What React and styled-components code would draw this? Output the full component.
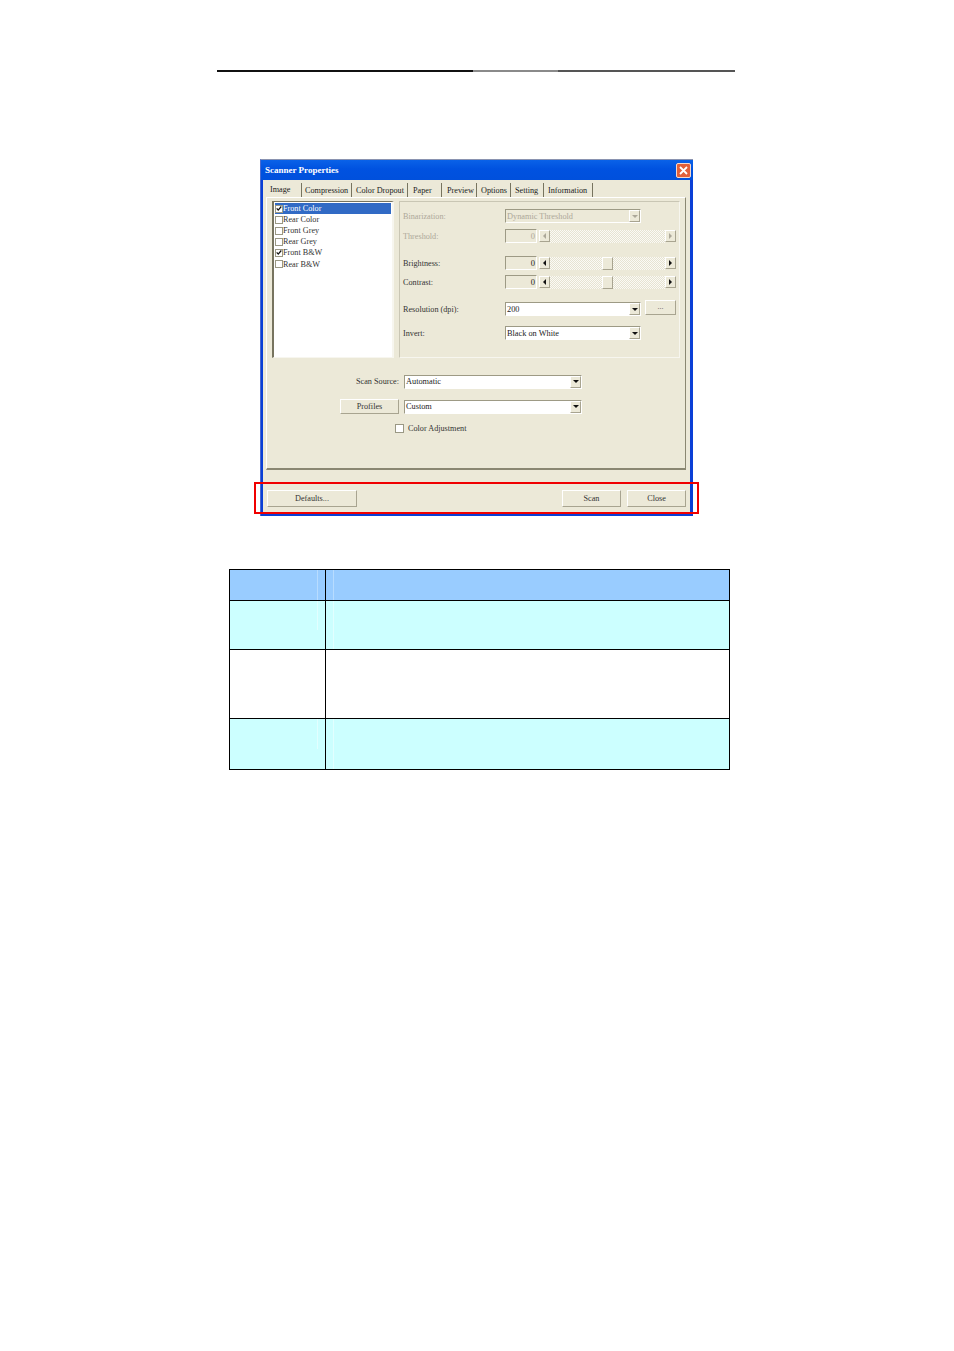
import React from "react"
import styled, { createGlobalStyle } from "styled-components"

const GlobalStyle = createGlobalStyle`
  html, body {
    margin: 0;
    padding: 0;
    background: #ffffff;
  }
  body {
    font-family: "Liberation Serif", serif;
  }
`

const Page = styled.div`
  width: 954px;
  height: 1351px;
  padding-top: 70px;
  box-sizing: border-box;
  display: flex;
  flex-direction: column;
  overflow: hidden;
`

const HeaderRule = styled.div`
  display: flex;
  margin-left: 217px;
  width: 518px;
  height: 2px;
`

const RulePart = styled.div`
  width: ${(p) => p.$width}px;
  background: ${(p) => p.$color};
`

const Window = styled.div`
  position: relative;
  margin: 87px 0 0 260px;
  width: 433px;
  height: 357px;
  box-sizing: border-box;
  display: flex;
  flex-direction: column;
  background: #0a3fd6;
  border-top: 1px solid #8a93b0;
  border-left: 1px solid #4a6ad0;
`

const TitleBar = styled.div`
  height: 20px;
  flex: none;
  display: flex;
  align-items: center;
  justify-content: space-between;
  padding: 0 2px 0 4px;
  background: linear-gradient(#0a62e8 0%, #0052e0 45%, #0050dc 100%);
`

const Title = styled.span`
  color: #ffffff;
  font-size: 9px;
  font-weight: bold;
`

const CloseButton = styled.div`
  width: 15px;
  height: 15px;
  display: flex;
  align-items: center;
  justify-content: center;
  border: 1px solid #f4d8cc;
  box-sizing: border-box;
  border-radius: 2px;
  background: #e2603a;
`

const WindowBody = styled.div`
  flex: 1;
  margin: 0 3px 2px 2px;
  padding: 3px 4px 0 3px;
  display: flex;
  flex-direction: column;
  background: #ece9d8;
`

const TabStrip = styled.div`
  display: flex;
  height: 14px;
  flex: none;
`

const Tab = styled.div`
  width: ${(p) => p.$width}px;
  height: 14px;
  box-sizing: border-box;
  font-size: 8.2px;
  line-height: 14px;
  white-space: nowrap;
  color: #222222;
  padding-left: ${(p) => p.$inset}px;
  padding-top: ${(p) => (p.$active ? "0" : "1px")};
  border-right: 1px solid #77745f;
`

const TabPanel = styled.div`
  height: 273px;
  box-sizing: border-box;
  flex: none;
  padding: 3px 5px 0 5px;
  border-top: 1px solid #ffffff;
  border-left: 1px solid #ffffff;
  border-right: 1px solid #8a8772;
  border-bottom: 2px solid #8a8772;
`

const TopArea = styled.div`
  display: flex;
  gap: 5px;
`

const ChannelList = styled.div`
  width: 122px;
  height: 157px;
  box-sizing: border-box;
  padding: 1px;
  background: #ffffff;
  border-top: 1px solid #77745f;
  border-left: 2px solid #77745f;
  border-right: 2px solid #f7f6ef;
  border-bottom: 1px solid #f7f6ef;
`

const ChannelRow = styled.div`
  display: flex;
  align-items: center;
  height: 11.1px;
  font-size: 8.2px;
  white-space: nowrap;
  color: ${(p) => (p.$selected ? "#ffffff" : "#333333")};
  background: ${(p) => (p.$selected ? "#316ac5" : "transparent")};
`

const CheckBox = styled.div`
  width: 8px;
  height: 8px;
  flex: none;
  box-sizing: border-box;
  display: flex;
  align-items: center;
  justify-content: center;
  background: #ffffff;
  border: 1px solid #9a9884;
`

const SettingsGroup = styled.div`
  width: 281px;
  height: 157px;
  box-sizing: border-box;
  padding: 7px 3px 0 3px;
  border: 1px solid #c9c6b4;
  border-right-color: #f7f6ef;
  border-bottom-color: #f7f6ef;
`

const SettingRow = styled.div`
  display: flex;
  align-items: center;
  height: 14px;
  margin-top: ${(p) => p.$top || 0}px;
`

const SettingLabel = styled.div`
  width: 102px;
  flex: none;
  font-size: 8.2px;
  white-space: nowrap;
  color: ${(p) => (p.$disabled ? "#aca899" : "#333333")};
`

const Sunken = styled.div`
  box-sizing: border-box;
  height: 14px;
  border-top: 1px solid #9d9a85;
  border-left: 1px solid #9d9a85;
  border-right: 1px solid #ffffff;
  border-bottom: 1px solid #ffffff;
  background: ${(p) => (p.$disabled ? "#ece9d8" : "#ffffff")};
`

const Combo = styled(Sunken)`
  width: ${(p) => p.$width}px;
  flex: none;
  display: flex;
  align-items: center;
  justify-content: space-between;
  padding: 0 0 0 1px;
  font-size: 8.3px;
  white-space: nowrap;
  color: ${(p) => (p.$disabled ? "#aca899" : "#222222")};
`

const Raised = styled.div`
  box-sizing: border-box;
  background: #ece9d8;
  border-top: 1px solid #ffffff;
  border-left: 1px solid #ffffff;
  border-right: 1px solid #a8a490;
  border-bottom: 1px solid #a8a490;
`

const ArrowBox = styled(Raised)`
  width: 11px;
  height: 12px;
  flex: none;
  display: flex;
  align-items: center;
  justify-content: center;
`

const Arrow = styled.div`
  width: 0;
  height: 0;
  border: 3px solid transparent;
  ${(p) => {
    const color = p.$disabled ? "#aca899" : "#111111"
    if (p.$dir === "left") return `border-left: 0; border-right-color: ${color};`
    if (p.$dir === "right") return `border-right: 0; border-left-color: ${color};`
    return `border-bottom: 0; border-top-color: ${color};`
  }}
`

const NumberBox = styled(Sunken)`
  width: 32px;
  flex: none;
  text-align: right;
  padding-right: 1px;
  font-size: 8.5px;
  line-height: 12px;
  color: ${(p) => (p.$disabled ? "#aca899" : "#222222")};
  background: #ece9d8;
`

const ScrollBar = styled.div`
  display: flex;
  align-items: center;
  margin-left: 2px;
  width: 137px;
  height: 13px;
`

const Track = styled.div`
  flex: 1;
  height: 13px;
  display: flex;
  justify-content: flex-start;
  background-color: #f5f3ea;
  background-image: repeating-conic-gradient(#e6e3d2 0 25%, #fbfaf5 0 50%);
  background-size: 2px 2px;
`

const Thumb = styled(Raised)`
  width: 11px;
  height: 13px;
  margin-left: 52px;
`

const SmallButton = styled(Raised)`
  width: 32px;
  height: 15px;
  margin-left: 4px;
  margin-top: -3px;
  text-align: center;
  font-size: 8px;
  line-height: 12px;
  color: #555555;
`

const SourceForm = styled.div`
  display: flex;
  flex-direction: column;
  margin-top: 16px;
`

const FormRow = styled.div`
  display: flex;
  align-items: center;
  justify-content: flex-end;
  gap: 5px;
  height: 15px;
  width: 310px;
  margin-top: ${(p) => p.$top || 0}px;
`

const FormLabel = styled.div`
  font-size: 8.2px;
  color: #333333;
  white-space: nowrap;
`

const AdjustRow = styled.div`
  display: flex;
  align-items: center;
  gap: 4px;
  margin: 10px 0 0 123px;
  font-size: 8.2px;
  color: #333333;
`

const AdjustBox = styled(CheckBox)`
  width: 9px;
  height: 9px;
`

const PushButton = styled(Raised)`
  width: ${(p) => p.$width}px;
  height: ${(p) => p.$height || 17}px;
  flex: none;
  display: flex;
  align-items: center;
  justify-content: center;
  font-size: 8.2px;
  padding-bottom: 1px;
  color: #333333;
`

const ButtonBar = styled.div`
  display: flex;
  align-items: flex-start;
  gap: 6px;
  margin-top: 20px;
  padding-left: 1px;
`

const Spacer = styled.div`
  flex: 1;
`

const Highlight = styled.div`
  position: absolute;
  left: -7px;
  top: 322px;
  width: 445px;
  height: 32px;
  box-sizing: border-box;
  border: 2px solid #f00000;
  pointer-events: none;
`

const InfoTable = styled.div`
  margin: 53px 0 0 229px;
  width: 501px;
  box-sizing: border-box;
  display: grid;
  grid-template-columns: 96px 1fr;
  grid-template-rows: 31px 49px 69px 51px;
  border-top: 1px solid #000000;
  border-left: 1px solid #000000;
`

const InfoCell = styled.div`
  box-sizing: border-box;
  border-right: 1px solid #000000;
  border-bottom: 1px solid #000000;
  background-color: ${(p) => p.$bg};
`

const Streak = styled.div`
  width: 1px;
  height: ${(p) => p.$height};
  margin-left: ${(p) => p.$left}px;
  background: ${(p) => p.$color};
`

const channels = [
  { name: "Front Color", checked: true, selected: true },
  { name: "Rear Color" },
  { name: "Front Grey" },
  { name: "Rear Grey" },
  { name: "Front B&W", checked: true },
  { name: "Rear B&W" },
]

const tabs = [
  { label: "Image", width: 36, inset: 4, active: true },
  { label: "Compression", width: 50, inset: 3 },
  { label: "Color Dropout", width: 56, inset: 4 },
  { label: "Paper", width: 34, inset: 5 },
  { label: "Preview", width: 35, inset: 5 },
  { label: "Options", width: 34, inset: 4 },
  { label: "Setting", width: 33, inset: 4 },
  { label: "Information", width: 49, inset: 4 },
]

const rows = [
  { bg: "#99ccff", streak: "#b8dcff", first: "100%", second: "100%" },
  { bg: "#ccffff", streak: "#e2ffff", first: "60%", second: "100%" },
  { bg: "#ffffff", streak: "#ffffff", first: "0", second: "0" },
  { bg: "#ccffff", streak: "#e2ffff", first: "60%", second: "100%" },
]

const Check = () => (
  <svg width="7" height="7" viewBox="0 0 7 7">
    <path d="M0.8 3.4 L2.6 5.4 L6.2 1.2" fill="none" stroke="#111" strokeWidth="1.5" />
  </svg>
)

const Slider = ({ disabled, thumb }) => (
  <>
    <NumberBox $disabled={disabled}>0</NumberBox>
    <ScrollBar>
      <ArrowBox>
        <Arrow $dir="left" $disabled={disabled} />
      </ArrowBox>
      <Track>{thumb && <Thumb />}</Track>
      <ArrowBox>
        <Arrow $dir="right" $disabled={disabled} />
      </ArrowBox>
    </ScrollBar>
  </>
)

const ComboBox = ({ value, width, disabled }) => (
  <Combo $width={width} $disabled={disabled}>
    {value}
    <ArrowBox>
      <Arrow $disabled={disabled} />
    </ArrowBox>
  </Combo>
)

export default function App() {
  return (
    <Page>
      <GlobalStyle />
      <HeaderRule>
        <RulePart $width={256} $color="#111111" />
        <RulePart $width={85} $color="#8a8a8a" />
        <RulePart $width={177} $color="#555555" />
      </HeaderRule>

      <Window>
        <TitleBar>
          <Title>Scanner Properties</Title>
          <CloseButton>
            <svg width="9" height="9" viewBox="0 0 9 9">
              <path d="M1 1 L8 8 M8 1 L1 8" stroke="#fff" strokeWidth="1.8" />
            </svg>
          </CloseButton>
        </TitleBar>

        <WindowBody>
          <TabStrip>
            {tabs.map((tab) => (
              <Tab key={tab.label} $width={tab.width} $inset={tab.inset} $active={tab.active}>
                {tab.label}
              </Tab>
            ))}
          </TabStrip>

          <TabPanel>
            <TopArea>
              <ChannelList>
                {channels.map((channel) => (
                  <ChannelRow key={channel.name} $selected={channel.selected}>
                    <CheckBox>{channel.checked && <Check />}</CheckBox>
                    {channel.name}
                  </ChannelRow>
                ))}
              </ChannelList>

              <SettingsGroup>
                <SettingRow>
                  <SettingLabel $disabled>Binarization:</SettingLabel>
                  <ComboBox value="Dynamic Threshold" width={136} disabled />
                </SettingRow>
                <SettingRow $top={6}>
                  <SettingLabel $disabled>Threshold:</SettingLabel>
                  <Slider disabled />
                </SettingRow>
                <SettingRow $top={13}>
                  <SettingLabel>Brightness:</SettingLabel>
                  <Slider thumb />
                </SettingRow>
                <SettingRow $top={5}>
                  <SettingLabel>Contrast:</SettingLabel>
                  <Slider thumb />
                </SettingRow>
                <SettingRow $top={13}>
                  <SettingLabel>Resolution (dpi):</SettingLabel>
                  <ComboBox value="200" width={136} />
                  <SmallButton>...</SmallButton>
                </SettingRow>
                <SettingRow $top={10}>
                  <SettingLabel>Invert:</SettingLabel>
                  <ComboBox value="Black on White" width={136} />
                </SettingRow>
              </SettingsGroup>
            </TopArea>

            <SourceForm>
              <FormRow>
                <FormLabel>Scan Source:</FormLabel>
                <ComboBox value="Automatic" width={178} />
              </FormRow>
              <FormRow $top={10}>
                <PushButton $width={59} $height={15}>
                  Profiles
                </PushButton>
                <ComboBox value="Custom" width={178} />
              </FormRow>
              <AdjustRow>
                <AdjustBox />
                Color Adjustment
              </AdjustRow>
            </SourceForm>
          </TabPanel>

          <ButtonBar>
            <PushButton $width={90}>Defaults...</PushButton>
            <Spacer />
            <PushButton $width={59}>Scan</PushButton>
            <PushButton $width={59}>Close</PushButton>
          </ButtonBar>
        </WindowBody>

        <Highlight />
      </Window>

      <InfoTable>
        {rows.map((row, index) => (
          <React.Fragment key={index}>
            <InfoCell $bg={row.bg}>
              <Streak $left={87} $height={row.first} $color={row.streak} />
            </InfoCell>
            <InfoCell $bg={row.bg}>
              <Streak $left={7} $height={row.second} $color={row.streak} />
            </InfoCell>
          </React.Fragment>
        ))}
      </InfoTable>
    </Page>
  )
}
